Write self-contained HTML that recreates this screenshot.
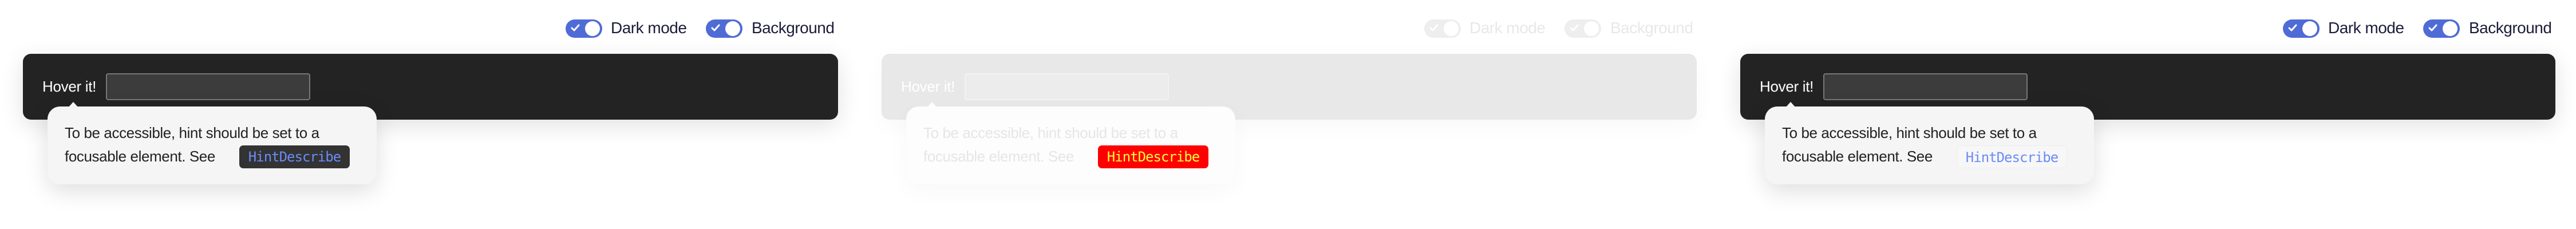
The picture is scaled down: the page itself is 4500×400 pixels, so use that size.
<!DOCTYPE html>
<html><head><meta charset="utf-8"><style>
*{box-sizing:border-box;margin:0;padding:0}
body{width:4500px;height:400px;background:#fff;position:relative;overflow:hidden;font-family:"Liberation Sans",sans-serif}
.p{position:absolute;top:0;width:1500px;height:400px}
.tg{position:absolute;top:34px;width:64px;height:32px;border-radius:16px;background:#4f6bd6}
.tg .k{position:absolute;right:4px;top:3px;width:26px;height:26px;border-radius:50%;background:#fff}
.tg svg{position:absolute;left:9px;top:8px}
.lb{position:absolute;top:31px;font-size:28px;color:#1c1c3a;letter-spacing:-0.5px;line-height:36px}
.box{position:absolute;left:40px;top:94px;width:1424px;height:115px;border-radius:14px;background:#232323;box-shadow:0 10px 40px rgba(0,0,0,.12)}
.hv{position:absolute;left:74px;top:136px;font-size:26px;color:#fff;letter-spacing:-0.3px}
.in{position:absolute;left:185px;top:128px;width:357px;height:47px;border:2px solid #777;border-radius:4px;background:#3c3c3c}
.tt{position:absolute;left:83px;top:186px;width:575px;height:136px;border-radius:22px;background:#f5f5f5;box-shadow:0 12px 40px rgba(0,0,0,.13)}
.ar{position:absolute;left:119px;top:178px;width:0;height:0;border-left:9px solid transparent;border-right:9px solid transparent;border-bottom:10px solid #f5f5f5}
.tx{position:absolute;left:113px;top:212px;font-size:26px;color:#222;line-height:41px;letter-spacing:-0.4px;white-space:nowrap}
.cd{position:absolute;left:418px;top:254px;width:193px;height:40px;border-radius:7px;background:#333;color:#6b8cf5;font-family:"DejaVu Sans Mono","Liberation Mono",monospace;font-size:24px;line-height:40px;text-align:center;letter-spacing:-1px}
</style></head><body>

<div class="p" style="left:0">
<div class="tg" style="left:988px"><svg width="16" height="14" viewBox="0 0 16 14"><path d="M2 7l4 4 8-9" stroke="#fff" stroke-width="3" fill="none" stroke-linecap="round" stroke-linejoin="round"/></svg><div class="k"></div></div>
<div class="lb" style="left:1067px">Dark mode</div>
<div class="tg" style="left:1233px"><svg width="16" height="14" viewBox="0 0 16 14"><path d="M2 7l4 4 8-9" stroke="#fff" stroke-width="3" fill="none" stroke-linecap="round" stroke-linejoin="round"/></svg><div class="k"></div></div>
<div class="lb" style="left:1313px">Background</div>
<div class="box"></div>
<div class="hv">Hover it!</div>
<div class="in"></div>
<div class="tt"></div><div class="ar"></div>
<div class="tx">To be accessible, hint should be set to a<br>focusable element. See</div>
<div class="cd">HintDescribe</div>
</div>

<div class="p" style="left:1500px">
<div class="tg" style="left:988px;background:#eee"><svg width="16" height="14" viewBox="0 0 16 14"><path d="M2 7l4 4 8-9" stroke="#fff" stroke-width="3" fill="none" stroke-linecap="round" stroke-linejoin="round"/></svg><div class="k"></div></div>
<div class="lb" style="left:1067px;color:#e8e8e8">Dark mode</div>
<div class="tg" style="left:1233px;background:#eee"><svg width="16" height="14" viewBox="0 0 16 14"><path d="M2 7l4 4 8-9" stroke="#fff" stroke-width="3" fill="none" stroke-linecap="round" stroke-linejoin="round"/></svg><div class="k"></div></div>
<div class="lb" style="left:1313px;color:#e8e8e8">Background</div>
<div class="box" style="background:#e8e8e8;box-shadow:0 10px 40px rgba(0,0,0,.03)"></div>
<div class="hv">Hover it!</div>
<div class="in" style="background:#ececec;border-color:#f2f2f2"></div>
<div class="tt" style="background:#fdfdfd;box-shadow:0 12px 40px rgba(0,0,0,.03)"></div><div class="ar" style="border-bottom-color:#fdfdfd"></div>
<div class="tx" style="color:#e6e6e6">To be accessible, hint should be set to a<br>focusable element. See</div>
<div class="cd" style="background:#f00;color:#ffff40">HintDescribe</div>
</div>

<div class="p" style="left:3000px">
<div class="tg" style="left:988px"><svg width="16" height="14" viewBox="0 0 16 14"><path d="M2 7l4 4 8-9" stroke="#fff" stroke-width="3" fill="none" stroke-linecap="round" stroke-linejoin="round"/></svg><div class="k"></div></div>
<div class="lb" style="left:1067px">Dark mode</div>
<div class="tg" style="left:1233px"><svg width="16" height="14" viewBox="0 0 16 14"><path d="M2 7l4 4 8-9" stroke="#fff" stroke-width="3" fill="none" stroke-linecap="round" stroke-linejoin="round"/></svg><div class="k"></div></div>
<div class="lb" style="left:1313px">Background</div>
<div class="box"></div>
<div class="hv">Hover it!</div>
<div class="in"></div>
<div class="tt"></div><div class="ar"></div>
<div class="tx">To be accessible, hint should be set to a<br>focusable element. See</div>
<div class="cd" style="background:#f7f7f7;border:1px solid #eee">HintDescribe</div>
</div>

</body></html>
